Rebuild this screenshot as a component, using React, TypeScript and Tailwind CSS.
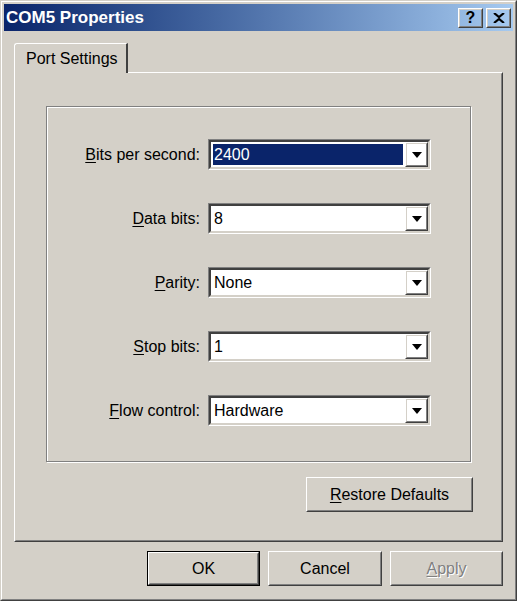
import React from "react";

const FONT = { fontFamily: '"Liberation Sans", Arial, sans-serif' };

// Win2000 style raised button edges
function Raised({
  className = "",
  children,
  isDefault = false,
}: {
  className?: string;
  children?: React.ReactNode;
  isDefault?: boolean;
}) {
  const inner = (
    <div className="h-full w-full border border-t-white border-l-white border-r-[#404040] border-b-[#404040]">
      <div className="h-full w-full border border-t-[#d4d0c8] border-l-[#d4d0c8] border-r-[#808080] border-b-[#808080] flex items-center justify-center">
        {children}
      </div>
    </div>
  );
  if (isDefault) {
    return <div className={`border border-black ${className}`}>{inner}</div>;
  }
  return <div className={className}>{inner}</div>;
}

function Mn({ children }: { children: React.ReactNode }) {
  return <span className="underline underline-offset-[2px]">{children}</span>;
}

function Combo({ value, selected = false }: { value: string; selected?: boolean }) {
  return (
    <div className="h-[31px] w-[223px] border border-t-[#808080] border-l-[#808080] border-r-white border-b-white">
      <div className="h-full w-full border-2 border-t-[#404040] border-l-[#404040] border-r-[#d4d0c8] border-b-[#d4d0c8] bg-white flex items-stretch">
        <div className="flex-1 p-[2px] flex">
          <div
            className={`flex-1 flex items-center pl-[1px] text-[16px] ${
              selected ? "bg-[#0a246a] text-white" : "text-black"
            }`}
          >
            {value}
          </div>
        </div>
        <Raised className="w-[23px] h-full">
          <svg width="10" height="6" viewBox="0 0 10 6">
            <path d="M0 0h10L5 6z" fill="#000" />
          </svg>
        </Raised>
      </div>
    </div>
  );
}

const rows: { label: React.ReactNode; value: string; selected?: boolean }[] = [
  { label: <><Mn>B</Mn>its per second:</>, value: "2400", selected: true },
  { label: <><Mn>D</Mn>ata bits:</>, value: "8" },
  { label: <><Mn>P</Mn>arity:</>, value: "None" },
  { label: <><Mn>S</Mn>top bits:</>, value: "1" },
  { label: <><Mn>F</Mn>low control:</>, value: "Hardware" },
];

export default function App() {
  return (
    <div className="w-[517px] h-[601px] bg-[#d4d0c8] text-black" style={FONT}>
      <div className="h-full w-full border border-t-[#d4d0c8] border-l-[#d4d0c8] border-r-[#404040] border-b-[#404040]">
        <div className="h-full w-full border border-t-white border-l-white border-r-[#808080] border-b-[#808080] p-[2px]">
          {/* title bar */}
          <div className="h-[27px] flex items-center pl-[2px] pr-[2px] bg-gradient-to-r from-[#0a246a] to-[#a6caf0]">
            <div className="flex-1 text-white font-bold text-[17px]">COM5 Properties</div>
            <div className="flex gap-[3px]">
              <Raised className="w-[25px] h-[20px]">
                <span className="font-bold text-[16px] leading-none">?</span>
              </Raised>
              <Raised className="w-[25px] h-[20px]">
                <svg width="12" height="10" viewBox="0 0 12 10">
                  <path d="M1 0L6 4L11 0M1 10L6 6L11 10" stroke="#000" strokeWidth="2.2" fill="none" />
                </svg>
              </Raised>
            </div>
          </div>

          <div className="px-[10px] pt-[12px]">
            {/* tab */}
            <div className="flex">
              <div className="relative z-10 -mb-[1px] h-[30px] w-[114px] bg-[#d4d0c8] border-t border-l border-t-white border-l-white rounded-tl-[3px] border-r-2 border-r-[#404040] flex items-center pl-[11px] text-[16px]">
                Port Settings
              </div>
            </div>
            {/* panel */}
            <div className="h-[470px] w-[489px] border border-t-white border-l-white border-r-[#404040] border-b-[#404040]">
              <div className="h-full w-full border border-t-[#d4d0c8] border-l-[#d4d0c8] border-r-[#808080] border-b-[#808080] pl-[30px] pt-[32px]">
                {/* group box */}
                <div className="w-[425px] h-[356px] border border-[#808080] shadow-[inset_1px_1px_0_#fff,1px_1px_0_#fff] pt-[32px]">
                  <div className="grid grid-cols-[153px_223px] gap-x-[8px] gap-y-[33px] items-center text-[16px]">
                    {rows.map((r, i) => (
                      <React.Fragment key={i}>
                        <div className="text-right">{r.label}</div>
                        <Combo value={r.value} selected={r.selected} />
                      </React.Fragment>
                    ))}
                  </div>
                </div>
                <div className="flex justify-end w-[427px] mt-[15px]">
                  <Raised className="w-[167px] h-[35px]">
                    <span className="text-[16px]">
                      <Mn>R</Mn>estore Defaults
                    </span>
                  </Raised>
                </div>
              </div>
            </div>

            {/* bottom buttons */}
            <div className="flex justify-end gap-[8px] mt-[9px] w-[489px]">
              <Raised isDefault className="w-[113px] h-[35px]">
                <span className="text-[16px]">OK</span>
              </Raised>
              <Raised className="w-[114px] h-[35px]">
                <span className="text-[16px]">Cancel</span>
              </Raised>
              <Raised className="w-[113px] h-[35px]">
                <span className="text-[16px] text-[#808080] [text-shadow:1px_1px_0_#fff]">
                  <Mn>A</Mn>pply
                </span>
              </Raised>
            </div>
          </div>
        </div>
      </div>
    </div>
  );
}
